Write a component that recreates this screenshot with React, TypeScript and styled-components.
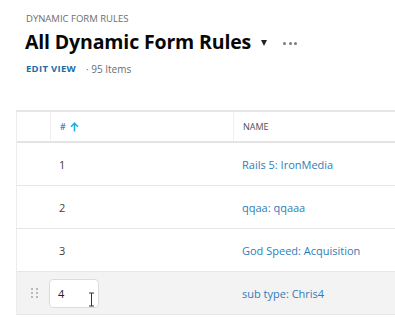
import React from "react";
import styled, { createGlobalStyle } from "styled-components";

const Global = createGlobalStyle`
  html, body { margin: 0; padding: 0; background: #fff; overflow: hidden; }
  body { font-family: "Open Sans", "Noto Sans", sans-serif; color: #3e3e3c; }
`;

const Page = styled.div`
  width: 395px;
  height: 317px;
  overflow: hidden;
  padding-top: 12px;
  box-sizing: border-box;
`;

const Head = styled.div`
  padding-left: 26px;
`;

const Eyebrow = styled.div`
  font-size: 9.5px;
  line-height: 13px;
  color: #6b6d70;
`;

const TitleRow = styled.div`
  display: flex;
  align-items: center;
  margin-top: 3px;
  height: 28px;
`;

const Title = styled.h1`
  margin: 0 0 0 -1px;
  font-size: 19.5px;
  font-weight: 700;
  color: #080707;
  line-height: 28px;
  letter-spacing: -0.15px;
`;

const Caret = styled.span`
  margin-left: 10px;
  margin-top: 2px;
  width: 0;
  height: 0;
  border-left: 3.5px solid transparent;
  border-right: 3.5px solid transparent;
  border-top: 6px solid #222;
`;

const More = styled.span`
  margin-left: 16px;
  display: flex;
  gap: 2.5px;
  margin-top: 3px;
  span {
    width: 3px;
    height: 3px;
    border-radius: 50%;
    background: #7a7a7a;
  }
`;

const Meta = styled.div`
  display: flex;
  align-items: center;
  margin-top: 7px;
  font-size: 9.5px;
  line-height: 12px;
`;

const EditView = styled.span`
  font-weight: 700;
  color: #1b6fa8;
  letter-spacing: 0.3px;
`;

const Count = styled.span`
  color: #6b6d70;
  margin-left: 10px;
  font-size: 10px;
`;

const Table = styled.div`
  margin-top: 35px;
  margin-left: 16px;
  width: 400px;
  border-top: 2px solid #e6e6e6;
  border-left: 1px solid #ececec;
`;

const Row = styled.div<{ $header?: boolean; $hover?: boolean }>`
  display: grid;
  grid-template-columns: 33px 183px 1fr;
  height: ${(p) => (p.$header ? "29px" : "42px")};
  border-bottom: ${(p) => (p.$header ? "2px solid #e4e4e4" : "1px solid #e6e6e6")};
  background: ${(p) => (p.$hover ? "#f3f3f3" : "#fff")};
  align-items: center;
`;

const HeadCell = styled.div<{ $divider?: boolean }>`
  height: 100%;
  display: flex;
  align-items: center;
  padding-left: 9px;
  font-size: 9px;
  color: #514f4d;
  border-left: ${(p) => (p.$divider ? "1px solid #f0f0f0" : "none")};
  box-sizing: border-box;
`;

const Cell = styled.div`
  display: flex;
  align-items: center;
  padding-left: 9px;
  font-size: 11px;
  color: #3e3e3c;
`;

const NameCell = styled(Cell)`
  color: #2f7db8;
`;

const HandleCell = styled.div`
  display: flex;
  justify-content: center;
  align-items: center;
  padding-left: 1px;
`;

const Dots = styled.div`
  display: grid;
  grid-template-columns: 2px 2px;
  gap: 2px 3px;
  span {
    width: 2px;
    height: 2px;
    background: #b9b9b9;
  }
`;

const InputBox = styled.div`
  position: relative;
  margin-left: -1px;
  width: 50px;
  height: 29px;
  box-sizing: border-box;
  background: #fff;
  border: 1px solid #dcdcdc;
  border-radius: 4px;
  display: flex;
  align-items: center;
  padding-left: 8px;
  font-size: 11px;
  color: #222;
`;

const Cursor = styled.svg`
  position: absolute;
  left: 38px;
  top: 12px;
`;

const rows = [
  { n: "1", name: "Rails 5: IronMedia" },
  { n: "2", name: "qqaa: qqaaa" },
  { n: "3", name: "God Speed: Acquisition" },
];

export default function App() {
  return (
    <Page>
      <Global />
      <Head>
        <Eyebrow>DYNAMIC FORM RULES</Eyebrow>
        <TitleRow>
          <Title>All Dynamic Form Rules</Title>
          <Caret />
          <More>
            <span />
            <span />
            <span />
          </More>
        </TitleRow>
        <Meta>
          <EditView>EDIT VIEW</EditView>
          <Count>· 95 Items</Count>
        </Meta>
      </Head>
      <Table>
        <Row $header>
          <HeadCell />
          <HeadCell $divider>
            #
            <svg width="9" height="10" viewBox="0 0 9 10" style={{ marginLeft: 4 }}>
              <path d="M4.5 9.5V1.5M1 4.8L4.5 1.2L8 4.8" stroke="#1fb0e6" strokeWidth="1.6" fill="none" />
            </svg>
          </HeadCell>
          <HeadCell $divider>NAME</HeadCell>
        </Row>
        {rows.map((r) => (
          <Row key={r.n}>
            <div />
            <Cell>{r.n}</Cell>
            <NameCell>{r.name}</NameCell>
          </Row>
        ))}
        <Row $hover>
          <HandleCell>
            <Dots>
              <span />
              <span />
              <span />
              <span />
              <span />
              <span />
            </Dots>
          </HandleCell>
          <Cell style={{ paddingLeft: 0 }}>
            <InputBox>
              4
              <Cursor width="7" height="15" viewBox="0 0 7 15">
                <path d="M1 1H3.5M3.5 1H6M3.5 1V14M1 14H6" stroke="#333" strokeWidth="1" fill="none" />
              </Cursor>
            </InputBox>
          </Cell>
          <NameCell>sub type: Chris4</NameCell>
        </Row>
      </Table>
    </Page>
  );
}
